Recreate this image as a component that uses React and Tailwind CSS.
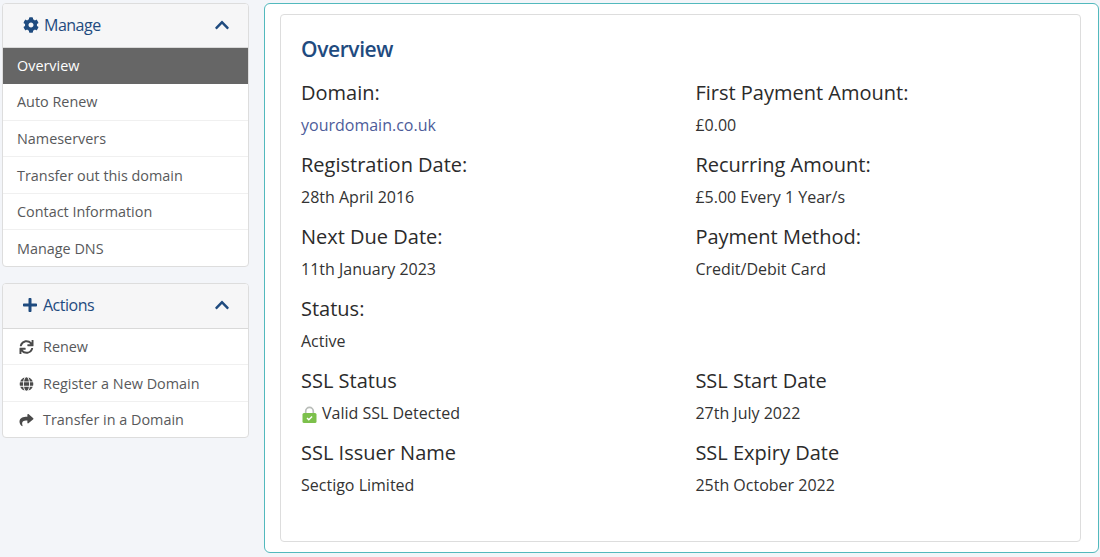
import { FaCog, FaPlus, FaSync, FaGlobe, FaShare, FaChevronUp } from "react-icons/fa";

const manageLinks = [
  { label: "Auto Renew", row: "h-[37px] border-b border-[#f0f0f0]" },
  { label: "Nameservers", row: "h-[36px] pt-[1px] border-b border-[#f0f0f0]" },
  { label: "Transfer out this domain", row: "h-[37px] pt-[1px] border-b border-[#f0f0f0]" },
  { label: "Contact Information", row: "h-[36px] pt-[1px] border-b border-[#f0f0f0]" },
  { label: "Manage DNS", row: "h-[36px] pt-[1px]" },
];

const actionLinks = [
  { label: "Renew", icon: FaSync, row: "h-[36px] pt-[1px] border-b border-[#f0f0f0]" },
  { label: "Register a New Domain", icon: FaGlobe, row: "h-[37px] pt-[1px] border-b border-[#f0f0f0]" },
  { label: "Transfer in a Domain", icon: FaShare, row: "h-[35px] pt-[1px]" },
];

function LockIcon() {
  return (
    <svg width="15" height="17" viewBox="0 0 15 17" className="mt-[3px] shrink-0">
      <path d="M3.7 8V5.2a3.8 3.8 0 0 1 7.6 0V8" fill="none" stroke="#b9bdb9" strokeWidth="1.7" />
      <rect x="0.5" y="7" width="14" height="10" rx="1.5" fill="#7cc04b" />
      <path d="M5 12l1.8 1.8 3.3-3.3" fill="none" stroke="#fff" strokeWidth="1.4" />
    </svg>
  );
}

function PanelHeader({ icon: Icon, title, iconClass, heightClass }) {
  return (
    <div className={`flex items-center justify-between border-b border-[#d9d9d9] bg-[#f6f6f7] pb-[2px] pl-[20px] pr-[18px] text-[#1f4b7f] ${heightClass}`}>
      <div className="flex items-center">
        <Icon className={iconClass} />
        <span className="text-[16px] font-medium tracking-[-0.5px]">{title}</span>
      </div>
      <FaChevronUp className="text-[16px]" />
    </div>
  );
}

function Field({ label, children }) {
  return (
    <div className="h-[72px]">
      <div className="h-[36px] pt-[2px] text-[20px] leading-[28px] text-[#2b2b2b]">{label}</div>
      <div className="text-[16px] leading-[24px] text-[#333]">{children}</div>
    </div>
  );
}

export default function App() {
  return (
    <div
      className="flex h-[557px] w-[1100px] items-start overflow-hidden bg-[#f3f5f9] pl-[2px] pr-[1px] pt-[3px]"
      style={{ fontFamily: '"Open Sans", sans-serif' }}
    >
      {/* Sidebar */}
      <div className="flex w-[247px] shrink-0 flex-col gap-[16px]">
        <div className="overflow-hidden rounded-[4px] border border-[#dddddd] bg-white">
          <PanelHeader icon={FaCog} title="Manage" iconClass="mr-[5px] text-[16px]" heightClass="h-[44px]" />
          <div className="flex h-[36px] items-center bg-[#666666] pb-[1px] pl-[14px] text-[14.4px] text-white">Overview</div>
          {manageLinks.map((item) => (
            <div key={item.label} className={`flex items-center pl-[14px] text-[14.4px] text-[#58595b] ${item.row}`}>
              {item.label}
            </div>
          ))}
        </div>

        <div className="overflow-hidden rounded-[4px] border border-[#dddddd] bg-white">
          <PanelHeader icon={FaPlus} title="Actions" iconClass="-ml-[1px] mr-[5px] text-[16px]" heightClass="h-[45px]" />
          {actionLinks.map((item) => (
            <div key={item.label} className={`flex items-center pl-[16px] text-[14.4px] text-[#58595b] ${item.row}`}>
              <item.icon className="mr-[9px] w-[15px] text-[14px] text-[#4a4a4a]" />
              {item.label}
            </div>
          ))}
        </div>
      </div>

      {/* Main panel */}
      <div className="ml-[15px] h-[550px] flex-1 rounded-[6px] border border-[#52b9bd] bg-white pl-[15px] pr-[17px] pt-[10px]">
        <div className="h-[528px] rounded-[4px] border border-[#dddddd] px-[20px] pt-[20px]">
          <h2 className="mb-[14px] text-[21px] font-semibold leading-[28px] tracking-[-0.4px] text-[#1f4b7f]">Overview</h2>
          <div className="grid grid-cols-[394.4px_1fr]">
            <Field label="Domain:">
              <span className="text-[#4d5c9a]">yourdomain.co.uk</span>
            </Field>
            <Field label="First Payment Amount:">£0.00</Field>
            <Field label="Registration Date:">28th April 2016</Field>
            <Field label="Recurring Amount:">£5.00 Every 1 Year/s</Field>
            <Field label="Next Due Date:">11th January 2023</Field>
            <Field label="Payment Method:">Credit/Debit Card</Field>
            <Field label="Status:">Active</Field>
            <div />
            <Field label="SSL Status">
              <span className="flex items-center gap-[5px] pl-[1px]">
                <LockIcon />
                Valid SSL Detected
              </span>
            </Field>
            <Field label="SSL Start Date">27th July 2022</Field>
            <Field label="SSL Issuer Name">Sectigo Limited</Field>
            <Field label="SSL Expiry Date">25th October 2022</Field>
          </div>
        </div>
      </div>
    </div>
  );
}
